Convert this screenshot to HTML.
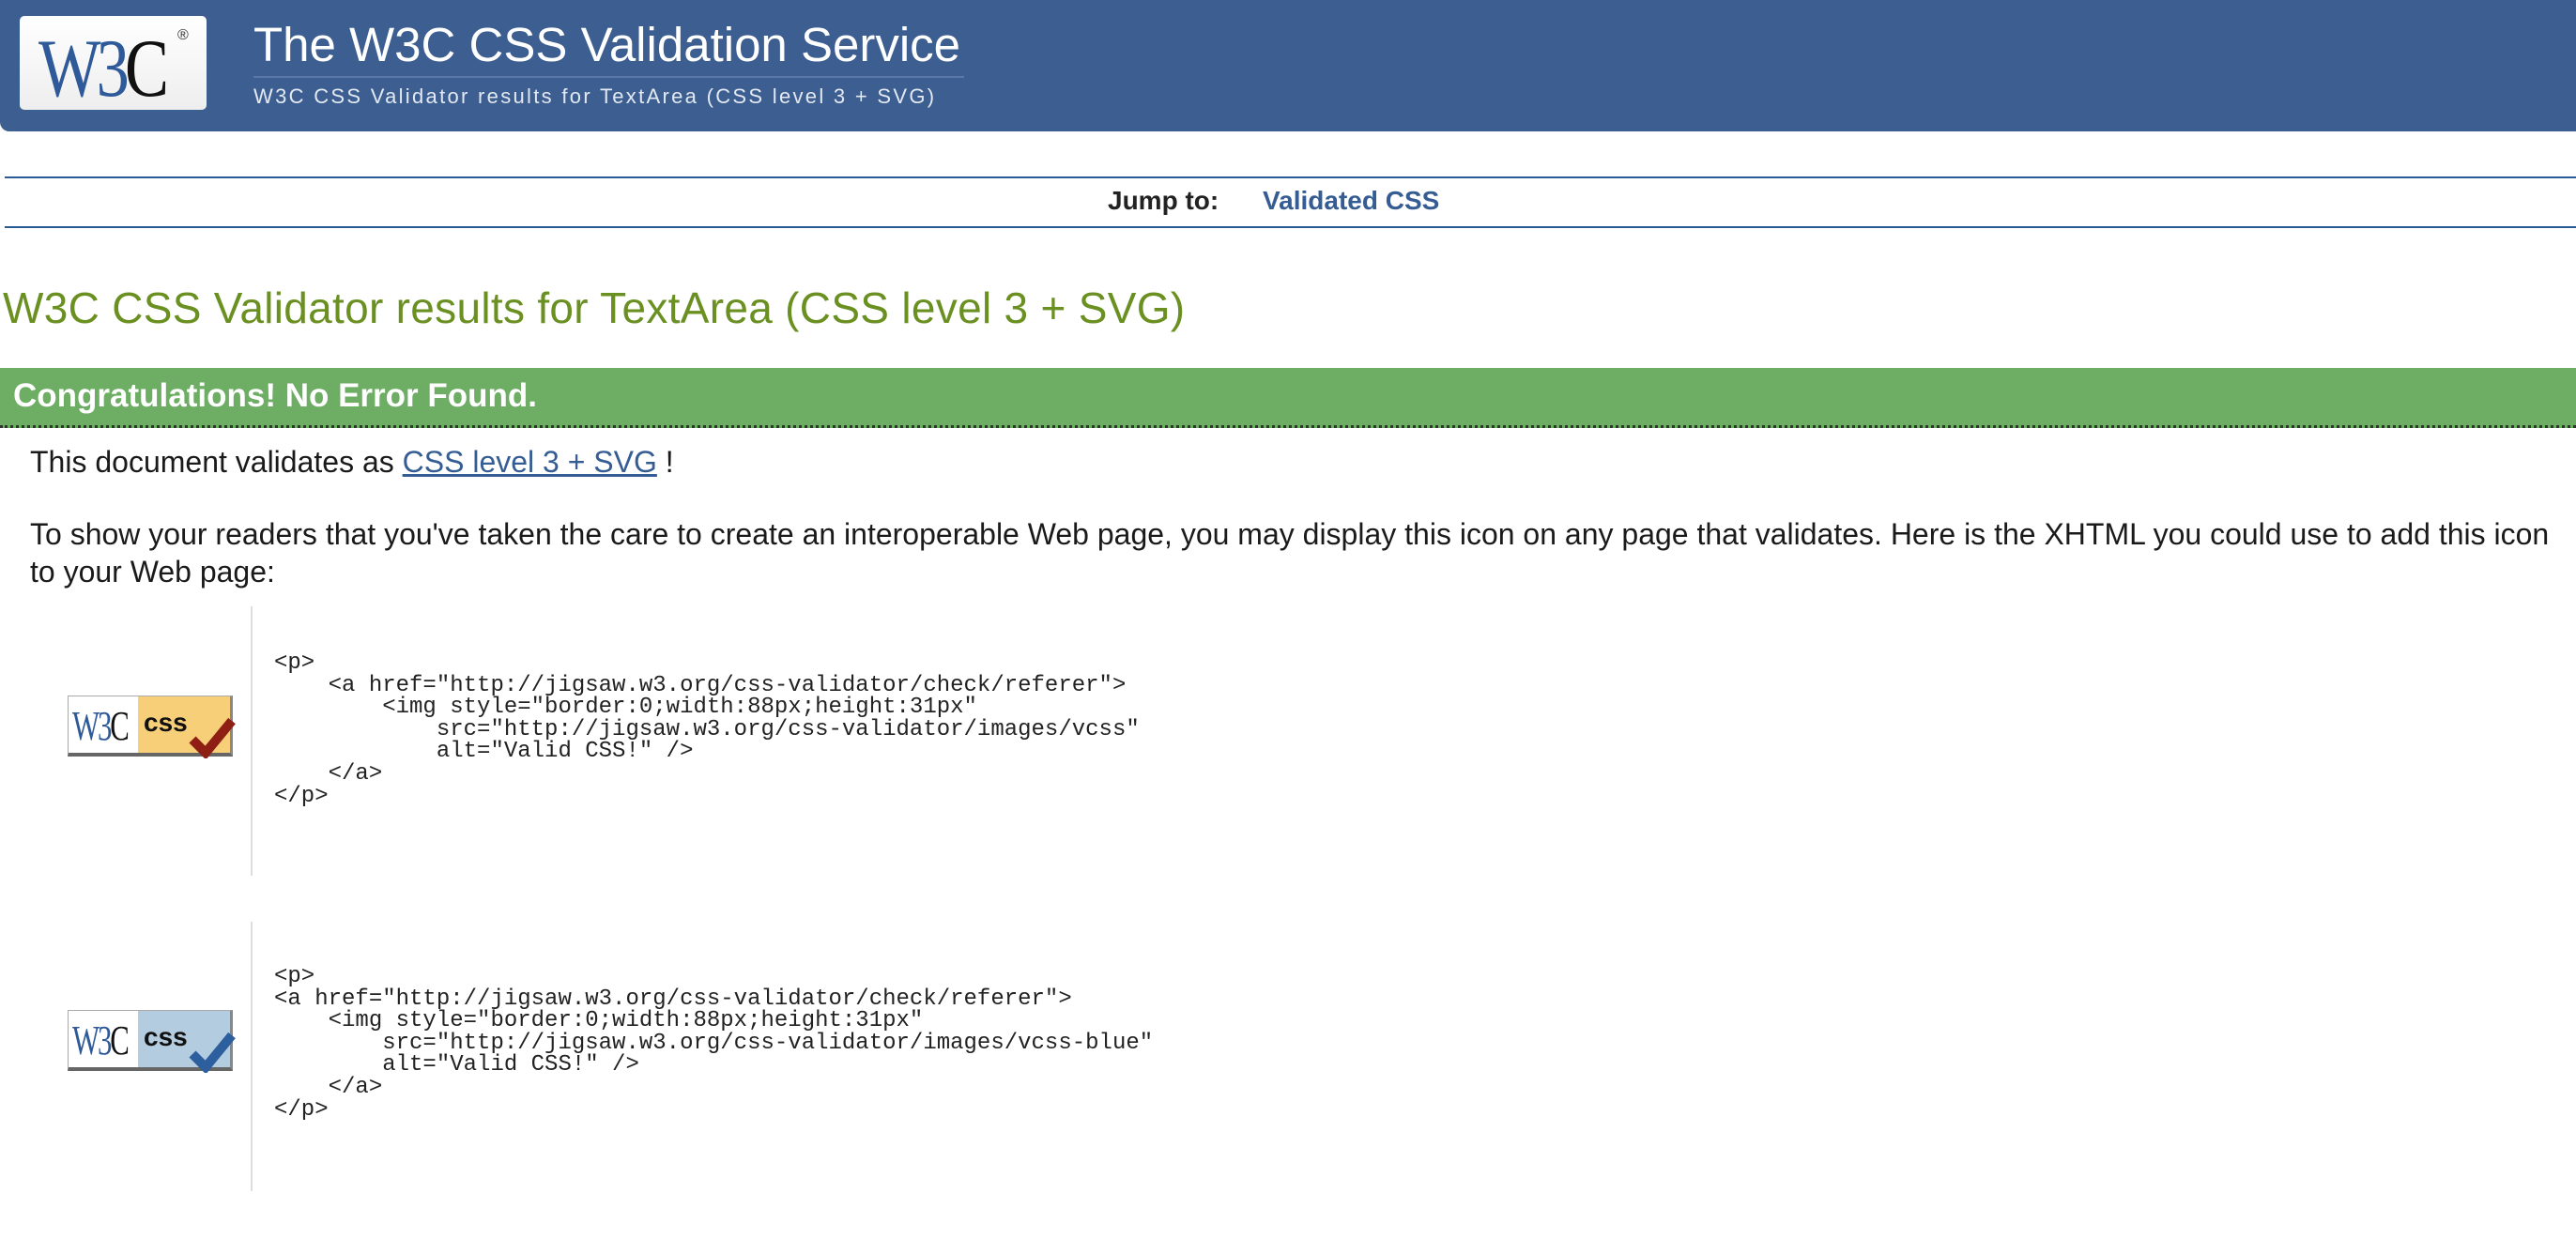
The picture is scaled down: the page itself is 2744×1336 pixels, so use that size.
<!DOCTYPE html>
<html><head><meta charset="utf-8"><style>
body{margin:0;width:2744px;height:1336px;background:#fff;position:relative;overflow:hidden;font-family:"Liberation Sans",sans-serif;color:#1a1a1a}
.a{position:absolute;white-space:nowrap}
#hdr{left:0;top:0;width:2744px;height:140px;background:#3d5e90;border-bottom-left-radius:10px}
#logo{left:21px;top:17px;width:199px;height:100px;background:linear-gradient(#fff,#eee);border-radius:5px}
.code{font-family:"Liberation Mono",monospace;font-size:24px;line-height:23.6px;color:#222;white-space:pre}
.vl{position:absolute;width:2px;background:#ddd}
.badge{position:absolute;width:172px;height:60px;border:1px solid #aaa;border-bottom:4px solid #666;border-right:3px solid #888;background:#fff;overflow:visible}
</style></head><body>
<div class="a" id="hdr"></div>
<div class="a" id="logo">
<span class="a" style="left:20px;top:6px;font-family:'Liberation Serif',serif;font-size:88px;color:#2f5a9a;transform:scaleX(0.8);transform-origin:left;letter-spacing:-6px">W3<span style="color:#111">C</span></span>
<span class="a" style="left:168px;top:12px;font-size:16px;color:#333">®</span>
</div>
<div class="a" style="left:270px;top:18px;font-size:51px;color:#fff">The W3C CSS Validation Service</div>
<div class="a" style="left:270px;top:81px;width:757px;height:2px;background:#5b79a8"></div>
<div class="a" style="left:270px;top:90px;font-size:22px;color:#e3e9f2;letter-spacing:2.3px">W3C CSS Validator results for TextArea (CSS level 3 + SVG)</div>

<div class="a" style="left:5px;top:188px;width:2739px;height:2px;background:#2a5a96"></div>
<div class="a" style="left:5px;top:241px;width:2739px;height:2px;background:#2a5a96"></div>
<div class="a" style="left:1180px;top:198px;font-size:28px;font-weight:bold;color:#222">Jump to:</div>
<div class="a" style="left:1345px;top:198px;font-size:28px;font-weight:bold;color:#355d93">Validated CSS</div>

<div class="a" style="left:3px;top:301px;font-size:46px;color:#6b9022;letter-spacing:0.3px">W3C CSS Validator results for TextArea (CSS level 3 + SVG)</div>

<div class="a" style="left:0;top:392px;width:2744px;height:61px;background:#6dad64;border-bottom:3px dotted #333"></div>
<div class="a" style="left:14px;top:402px;font-size:35px;font-weight:bold;color:#fff">Congratulations! No Error Found.</div>

<div class="a" style="left:32px;top:474px;font-size:32px">This document validates as <span style="color:#355d93;text-decoration:underline">CSS level 3 + SVG</span> !</div>
<div class="a" style="left:32px;top:549px;font-size:32px;line-height:40px">To show your readers that you've taken the care to create an interoperable Web page, you may display this icon on any page that validates. Here is the XHTML you could use to add this icon<br>to your Web page:</div>

<div class="vl" style="left:267px;top:646px;height:287px"></div>
<div class="badge" style="left:72px;top:741px">
<div class="a" style="left:0;top:0;width:74px;height:60px;background:#fff"></div>
<div class="a" style="left:74px;top:0;width:98px;height:60px;background:#f7cf78"></div>
<span class="a" style="left:4px;top:6px;font-family:'Liberation Serif',serif;font-size:44px;color:#2f5a9a;transform:scaleX(0.7);transform-origin:left;letter-spacing:-3px">W3<span style="color:#111">C</span></span>
<span class="a" style="left:80px;top:12px;font-size:28px;font-weight:bold;color:#111">css</span>
<svg class="a" style="left:128px;top:20px" width="50" height="46"><path d="M4 26 L18 40 L46 6" stroke="#8f1f14" stroke-width="10" fill="none"/></svg>
</div>
<div class="a code" style="left:292px;top:695px">&lt;p&gt;
    &lt;a href="http://jigsaw.w3.org/css-validator/check/referer"&gt;
        &lt;img style="border:0;width:88px;height:31px"
            src="http://jigsaw.w3.org/css-validator/images/vcss"
            alt="Valid CSS!" /&gt;
    &lt;/a&gt;
&lt;/p&gt;</div>

<div class="vl" style="left:267px;top:982px;height:287px"></div>
<div class="badge" style="left:72px;top:1076px">
<div class="a" style="left:0;top:0;width:74px;height:60px;background:#fff"></div>
<div class="a" style="left:74px;top:0;width:98px;height:60px;background:#b4cce0"></div>
<span class="a" style="left:4px;top:6px;font-family:'Liberation Serif',serif;font-size:44px;color:#2f5a9a;transform:scaleX(0.7);transform-origin:left;letter-spacing:-3px">W3<span style="color:#111">C</span></span>
<span class="a" style="left:80px;top:12px;font-size:28px;font-weight:bold;color:#111">css</span>
<svg class="a" style="left:128px;top:20px" width="50" height="46"><path d="M4 26 L18 40 L46 6" stroke="#2d5f9e" stroke-width="10" fill="none"/></svg>
</div>
<div class="a code" style="left:292px;top:1029px">&lt;p&gt;
&lt;a href="http://jigsaw.w3.org/css-validator/check/referer"&gt;
    &lt;img style="border:0;width:88px;height:31px"
        src="http://jigsaw.w3.org/css-validator/images/vcss-blue"
        alt="Valid CSS!" /&gt;
    &lt;/a&gt;
&lt;/p&gt;</div>
</body></html>
